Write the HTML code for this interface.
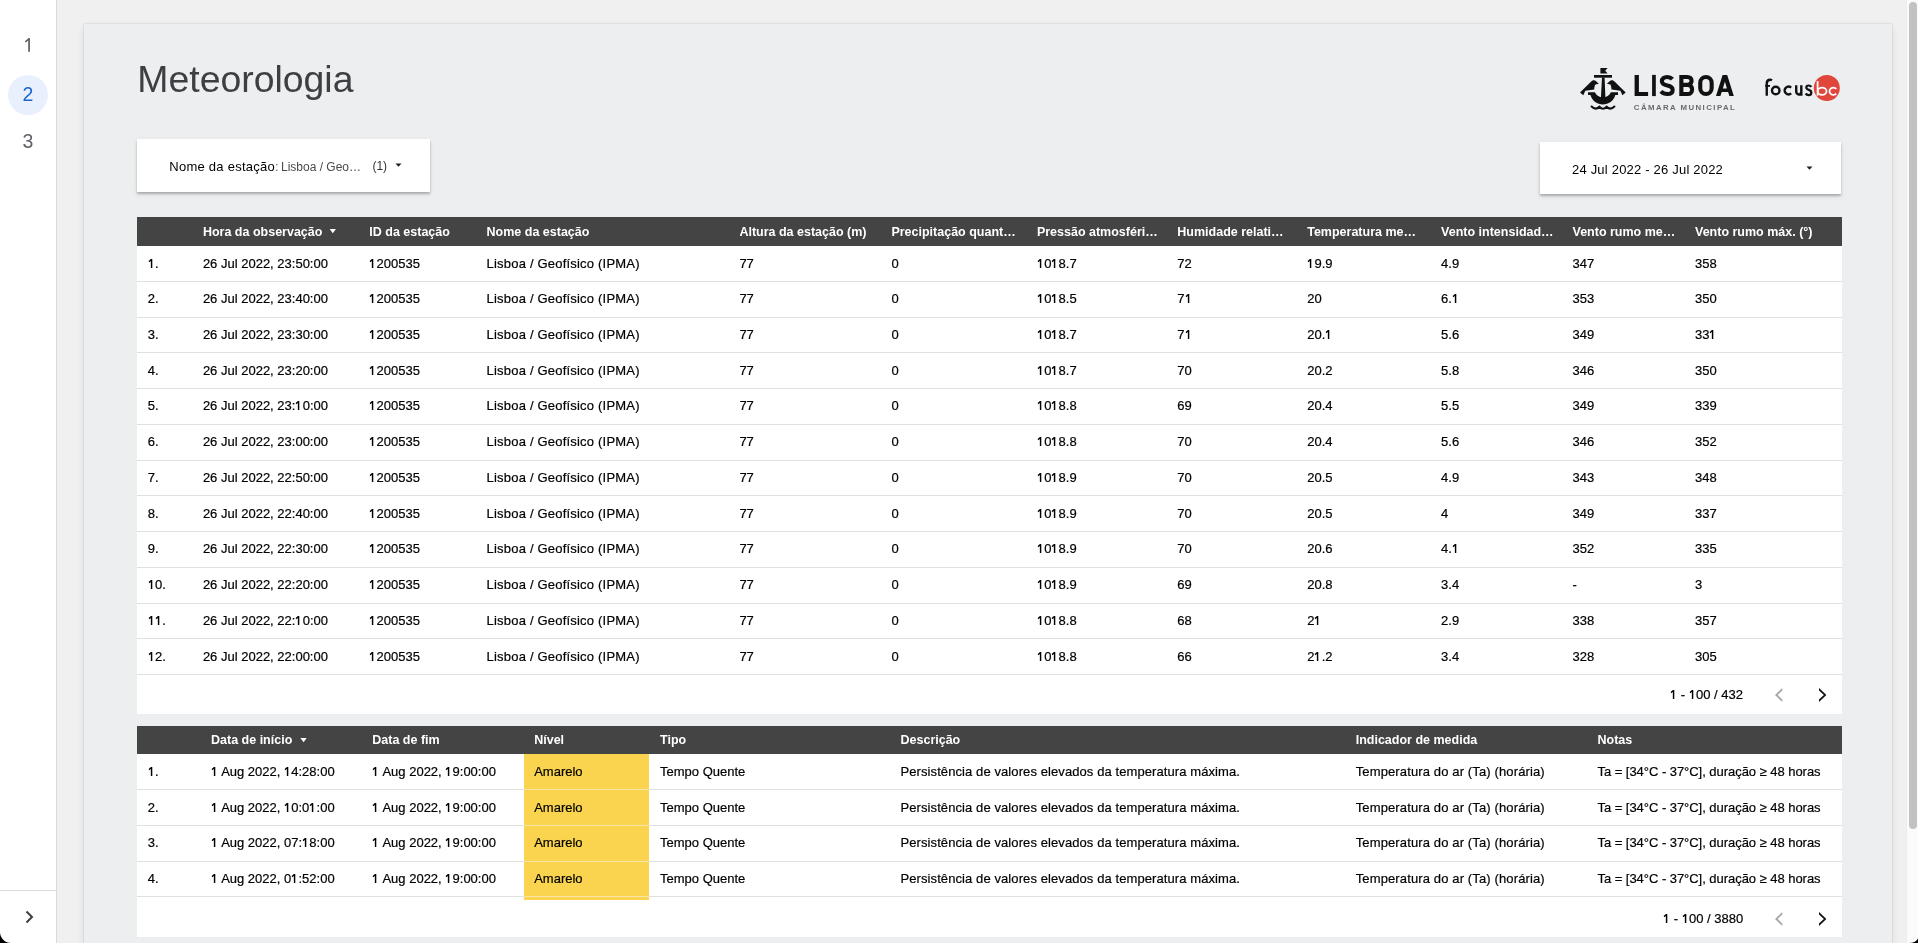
<!DOCTYPE html><html><head><meta charset="utf-8"><style>
*{box-sizing:border-box;margin:0;padding:0}
html,body{width:1918px;height:943px;overflow:hidden;background:#f0f0f0;font-family:"Liberation Sans", sans-serif;position:relative}
.abs{position:absolute}
.bt,.ht,.pt{position:absolute;white-space:nowrap;line-height:16px}
.bt{font-size:13px;color:#000;-webkit-text-stroke:0.2px #000}
.one{display:inline-block;position:relative;color:transparent;-webkit-text-stroke:0 transparent}
.one svg{position:absolute;left:0;top:0}
.ht{font-size:12.5px;color:#fff;font-weight:bold}
</style></head><body><div style="position:absolute;left:0;top:0;width:1918px;height:943px;will-change:transform">
<div class="abs" style="left:0;top:0;width:57px;height:943px;background:#fff;border-right:1px solid #dadada"></div>
<div class="abs" style="left:8px;top:74.5px;width:40px;height:40px;border-radius:50%;background:#e8f0fe"></div>
<svg class="abs" style="left:20px;top:34px" width="16" height="22" viewBox="20 34 16 22"><path d="M25.3,41.9 L29.3,38.7" stroke="#5f6368" stroke-width="1.6" fill="none"/><rect x="28.2" y="38.1" width="1.75" height="13.7" fill="#5f6368"/></svg>
<div class="abs" style="left:0;width:56px;top:81.5px;height:24px;line-height:24px;text-align:center;font-size:19.5px;color:#1967d2">2</div>
<div class="abs" style="left:0;width:56px;top:129px;height:24px;line-height:24px;text-align:center;font-size:19.5px;color:#5f6368">3</div>
<div class="abs" style="left:0;top:890px;width:56px;height:1px;background:#dadada"></div>
<svg class="abs" style="left:20px;top:906px" width="18" height="22" viewBox="0 0 18 22"><path d="M6.5 5.5 L12 11 L6.5 16.5" fill="none" stroke="#3c4043" stroke-width="2"/></svg>
<div class="abs" style="left:84px;top:24px;width:1808px;height:940px;background:#eceef0;box-shadow:0 0 1.5px rgba(0,0,0,0.22),0 3px 8px rgba(0,0,0,0.09)"></div>
<div class="abs" style="left:1906px;top:0;width:12px;height:943px;background:#fbfbfb;border-left:1px solid #ececec"></div>
<div class="abs" style="left:1909px;top:2px;width:7.5px;height:827px;border-radius:4px;background:#c2c2c2"></div>
<div class="abs" style="left:137.3px;top:57px;font-size:37.4px;line-height:44px;color:#3c4043;white-space:nowrap">Meteorologia</div>
<div class="abs" style="left:137px;top:139.2px;width:293.3px;height:52.5px;background:#fff;box-shadow:0 1.5px 2px rgba(0,0,0,0.24),0 2px 6px rgba(0,0,0,0.08)"></div>
<div class="abs" style="left:169.3px;top:158.5px;line-height:16px;white-space:nowrap;font-size:13px;letter-spacing:0.25px;color:#000">Nome da estação<span style="color:#5f6368">:</span></div>
<div class="abs" style="left:281px;top:158.5px;line-height:16px;white-space:nowrap;font-size:12px;color:#4a4a4a">Lisboa / Geo…</div>
<div class="abs" style="left:372.4px;top:158px;line-height:16px;white-space:nowrap;font-size:12px;color:#333">(1)</div>
<svg class="abs" style="left:394px;top:162px" width="10" height="6"><path d="M1.5 1.5 L7.5 1.5 L4.5 4.8 Z" fill="#202020"/></svg>
<div class="abs" style="left:1540px;top:142px;width:301px;height:52.2px;background:#fff;box-shadow:0 1.5px 2px rgba(0,0,0,0.24),0 2px 6px rgba(0,0,0,0.08)"></div>
<div class="abs" style="left:1572px;top:162px;line-height:16px;white-space:nowrap;font-size:13px;letter-spacing:0.2px;color:#000">24 Jul 2022 - 26 Jul 2022</div>
<svg class="abs" style="left:1805px;top:165px" width="10" height="6"><path d="M1.5 1.5 L7.5 1.5 L4.5 4.8 Z" fill="#202020"/></svg>
<div class="abs" style="left:137px;top:217.4px;width:1704.5px;height:496.54px;background:#fff"></div>
<div class="abs" style="left:137px;top:217.4px;width:1704.5px;height:28.3px;background:#444"></div>
<div class="ht" style="left:202.9px;top:224px;">Hora da observação</div>
<div class="ht" style="left:369.3px;top:224px;">ID da estação</div>
<div class="ht" style="left:486.6px;top:224px;">Nome da estação</div>
<div class="ht" style="left:739.4px;top:224px;">Altura da estação (m)</div>
<div class="ht" style="left:891.4px;top:224px;">Precipitação quant…</div>
<div class="ht" style="left:1036.9px;top:224px;">Pressão atmosféri…</div>
<div class="ht" style="left:1177.3px;top:224px;">Humidade relati…</div>
<div class="ht" style="left:1307.2px;top:224px;">Temperatura me…</div>
<div class="ht" style="left:1441.1px;top:224px;">Vento intensidad…</div>
<div class="ht" style="left:1572.5px;top:224px;">Vento rumo me…</div>
<div class="ht" style="left:1695.0px;top:224px;">Vento rumo máx. (°)</div>
<svg class="abs" style="left:325px;top:225px" width="15" height="12" viewBox="325 225 15 12"><polygon points="329.7,228.9 335.9,228.9 332.8,233.2" fill="#fff"/></svg>
<div class="abs" style="left:137px;top:281px;width:1704.5px;height:1px;background:#e0e0e0"></div>
<div class="bt" style="left:147.8px;top:256px;"><span class="one">1<svg width="8" height="16" viewBox="0 0 8 16"><polygon points="2.95,3.1 4.3,3.1 4.3,12 2.85,12 2.85,5.0 1.2,6.2 0.65,5.05" fill="#000"/></svg></span>.</div>
<div class="bt" style="left:202.9px;top:256px;">26 Jul 2022, 23:50:00</div>
<div class="bt" style="left:369.3px;top:256px;"><span class="one">1<svg width="8" height="16" viewBox="0 0 8 16"><polygon points="2.95,3.1 4.3,3.1 4.3,12 2.85,12 2.85,5.0 1.2,6.2 0.65,5.05" fill="#000"/></svg></span>200535</div>
<div class="bt" style="left:486.6px;top:256px;letter-spacing:0.2px">Lisboa / Geofísico (IPMA)</div>
<div class="bt" style="left:739.4px;top:256px;">77</div>
<div class="bt" style="left:891.4px;top:256px;">0</div>
<div class="bt" style="left:1036.9px;top:256px;"><span class="one">1<svg width="8" height="16" viewBox="0 0 8 16"><polygon points="2.95,3.1 4.3,3.1 4.3,12 2.85,12 2.85,5.0 1.2,6.2 0.65,5.05" fill="#000"/></svg></span>0<span class="one">1<svg width="8" height="16" viewBox="0 0 8 16"><polygon points="2.95,3.1 4.3,3.1 4.3,12 2.85,12 2.85,5.0 1.2,6.2 0.65,5.05" fill="#000"/></svg></span>8.7</div>
<div class="bt" style="left:1177.3px;top:256px;">72</div>
<div class="bt" style="left:1307.2px;top:256px;"><span class="one">1<svg width="8" height="16" viewBox="0 0 8 16"><polygon points="2.95,3.1 4.3,3.1 4.3,12 2.85,12 2.85,5.0 1.2,6.2 0.65,5.05" fill="#000"/></svg></span>9.9</div>
<div class="bt" style="left:1441.1px;top:256px;">4.9</div>
<div class="bt" style="left:1572.5px;top:256px;">347</div>
<div class="bt" style="left:1695.0px;top:256px;">358</div>
<div class="abs" style="left:137px;top:317px;width:1704.5px;height:1px;background:#e0e0e0"></div>
<div class="bt" style="left:147.8px;top:291px;">2.</div>
<div class="bt" style="left:202.9px;top:291px;">26 Jul 2022, 23:40:00</div>
<div class="bt" style="left:369.3px;top:291px;"><span class="one">1<svg width="8" height="16" viewBox="0 0 8 16"><polygon points="2.95,3.1 4.3,3.1 4.3,12 2.85,12 2.85,5.0 1.2,6.2 0.65,5.05" fill="#000"/></svg></span>200535</div>
<div class="bt" style="left:486.6px;top:291px;letter-spacing:0.2px">Lisboa / Geofísico (IPMA)</div>
<div class="bt" style="left:739.4px;top:291px;">77</div>
<div class="bt" style="left:891.4px;top:291px;">0</div>
<div class="bt" style="left:1036.9px;top:291px;"><span class="one">1<svg width="8" height="16" viewBox="0 0 8 16"><polygon points="2.95,3.1 4.3,3.1 4.3,12 2.85,12 2.85,5.0 1.2,6.2 0.65,5.05" fill="#000"/></svg></span>0<span class="one">1<svg width="8" height="16" viewBox="0 0 8 16"><polygon points="2.95,3.1 4.3,3.1 4.3,12 2.85,12 2.85,5.0 1.2,6.2 0.65,5.05" fill="#000"/></svg></span>8.5</div>
<div class="bt" style="left:1177.3px;top:291px;">7<span class="one">1<svg width="8" height="16" viewBox="0 0 8 16"><polygon points="2.95,3.1 4.3,3.1 4.3,12 2.85,12 2.85,5.0 1.2,6.2 0.65,5.05" fill="#000"/></svg></span></div>
<div class="bt" style="left:1307.2px;top:291px;">20</div>
<div class="bt" style="left:1441.1px;top:291px;">6.<span class="one">1<svg width="8" height="16" viewBox="0 0 8 16"><polygon points="2.95,3.1 4.3,3.1 4.3,12 2.85,12 2.85,5.0 1.2,6.2 0.65,5.05" fill="#000"/></svg></span></div>
<div class="bt" style="left:1572.5px;top:291px;">353</div>
<div class="bt" style="left:1695.0px;top:291px;">350</div>
<div class="abs" style="left:137px;top:352px;width:1704.5px;height:1px;background:#e0e0e0"></div>
<div class="bt" style="left:147.8px;top:327px;">3.</div>
<div class="bt" style="left:202.9px;top:327px;">26 Jul 2022, 23:30:00</div>
<div class="bt" style="left:369.3px;top:327px;"><span class="one">1<svg width="8" height="16" viewBox="0 0 8 16"><polygon points="2.95,3.1 4.3,3.1 4.3,12 2.85,12 2.85,5.0 1.2,6.2 0.65,5.05" fill="#000"/></svg></span>200535</div>
<div class="bt" style="left:486.6px;top:327px;letter-spacing:0.2px">Lisboa / Geofísico (IPMA)</div>
<div class="bt" style="left:739.4px;top:327px;">77</div>
<div class="bt" style="left:891.4px;top:327px;">0</div>
<div class="bt" style="left:1036.9px;top:327px;"><span class="one">1<svg width="8" height="16" viewBox="0 0 8 16"><polygon points="2.95,3.1 4.3,3.1 4.3,12 2.85,12 2.85,5.0 1.2,6.2 0.65,5.05" fill="#000"/></svg></span>0<span class="one">1<svg width="8" height="16" viewBox="0 0 8 16"><polygon points="2.95,3.1 4.3,3.1 4.3,12 2.85,12 2.85,5.0 1.2,6.2 0.65,5.05" fill="#000"/></svg></span>8.7</div>
<div class="bt" style="left:1177.3px;top:327px;">7<span class="one">1<svg width="8" height="16" viewBox="0 0 8 16"><polygon points="2.95,3.1 4.3,3.1 4.3,12 2.85,12 2.85,5.0 1.2,6.2 0.65,5.05" fill="#000"/></svg></span></div>
<div class="bt" style="left:1307.2px;top:327px;">20.<span class="one">1<svg width="8" height="16" viewBox="0 0 8 16"><polygon points="2.95,3.1 4.3,3.1 4.3,12 2.85,12 2.85,5.0 1.2,6.2 0.65,5.05" fill="#000"/></svg></span></div>
<div class="bt" style="left:1441.1px;top:327px;">5.6</div>
<div class="bt" style="left:1572.5px;top:327px;">349</div>
<div class="bt" style="left:1695.0px;top:327px;">33<span class="one">1<svg width="8" height="16" viewBox="0 0 8 16"><polygon points="2.95,3.1 4.3,3.1 4.3,12 2.85,12 2.85,5.0 1.2,6.2 0.65,5.05" fill="#000"/></svg></span></div>
<div class="abs" style="left:137px;top:388px;width:1704.5px;height:1px;background:#e0e0e0"></div>
<div class="bt" style="left:147.8px;top:363px;">4.</div>
<div class="bt" style="left:202.9px;top:363px;">26 Jul 2022, 23:20:00</div>
<div class="bt" style="left:369.3px;top:363px;"><span class="one">1<svg width="8" height="16" viewBox="0 0 8 16"><polygon points="2.95,3.1 4.3,3.1 4.3,12 2.85,12 2.85,5.0 1.2,6.2 0.65,5.05" fill="#000"/></svg></span>200535</div>
<div class="bt" style="left:486.6px;top:363px;letter-spacing:0.2px">Lisboa / Geofísico (IPMA)</div>
<div class="bt" style="left:739.4px;top:363px;">77</div>
<div class="bt" style="left:891.4px;top:363px;">0</div>
<div class="bt" style="left:1036.9px;top:363px;"><span class="one">1<svg width="8" height="16" viewBox="0 0 8 16"><polygon points="2.95,3.1 4.3,3.1 4.3,12 2.85,12 2.85,5.0 1.2,6.2 0.65,5.05" fill="#000"/></svg></span>0<span class="one">1<svg width="8" height="16" viewBox="0 0 8 16"><polygon points="2.95,3.1 4.3,3.1 4.3,12 2.85,12 2.85,5.0 1.2,6.2 0.65,5.05" fill="#000"/></svg></span>8.7</div>
<div class="bt" style="left:1177.3px;top:363px;">70</div>
<div class="bt" style="left:1307.2px;top:363px;">20.2</div>
<div class="bt" style="left:1441.1px;top:363px;">5.8</div>
<div class="bt" style="left:1572.5px;top:363px;">346</div>
<div class="bt" style="left:1695.0px;top:363px;">350</div>
<div class="abs" style="left:137px;top:424px;width:1704.5px;height:1px;background:#e0e0e0"></div>
<div class="bt" style="left:147.8px;top:398px;">5.</div>
<div class="bt" style="left:202.9px;top:398px;">26 Jul 2022, 23:<span class="one">1<svg width="8" height="16" viewBox="0 0 8 16"><polygon points="2.95,3.1 4.3,3.1 4.3,12 2.85,12 2.85,5.0 1.2,6.2 0.65,5.05" fill="#000"/></svg></span>0:00</div>
<div class="bt" style="left:369.3px;top:398px;"><span class="one">1<svg width="8" height="16" viewBox="0 0 8 16"><polygon points="2.95,3.1 4.3,3.1 4.3,12 2.85,12 2.85,5.0 1.2,6.2 0.65,5.05" fill="#000"/></svg></span>200535</div>
<div class="bt" style="left:486.6px;top:398px;letter-spacing:0.2px">Lisboa / Geofísico (IPMA)</div>
<div class="bt" style="left:739.4px;top:398px;">77</div>
<div class="bt" style="left:891.4px;top:398px;">0</div>
<div class="bt" style="left:1036.9px;top:398px;"><span class="one">1<svg width="8" height="16" viewBox="0 0 8 16"><polygon points="2.95,3.1 4.3,3.1 4.3,12 2.85,12 2.85,5.0 1.2,6.2 0.65,5.05" fill="#000"/></svg></span>0<span class="one">1<svg width="8" height="16" viewBox="0 0 8 16"><polygon points="2.95,3.1 4.3,3.1 4.3,12 2.85,12 2.85,5.0 1.2,6.2 0.65,5.05" fill="#000"/></svg></span>8.8</div>
<div class="bt" style="left:1177.3px;top:398px;">69</div>
<div class="bt" style="left:1307.2px;top:398px;">20.4</div>
<div class="bt" style="left:1441.1px;top:398px;">5.5</div>
<div class="bt" style="left:1572.5px;top:398px;">349</div>
<div class="bt" style="left:1695.0px;top:398px;">339</div>
<div class="abs" style="left:137px;top:460px;width:1704.5px;height:1px;background:#e0e0e0"></div>
<div class="bt" style="left:147.8px;top:434px;">6.</div>
<div class="bt" style="left:202.9px;top:434px;">26 Jul 2022, 23:00:00</div>
<div class="bt" style="left:369.3px;top:434px;"><span class="one">1<svg width="8" height="16" viewBox="0 0 8 16"><polygon points="2.95,3.1 4.3,3.1 4.3,12 2.85,12 2.85,5.0 1.2,6.2 0.65,5.05" fill="#000"/></svg></span>200535</div>
<div class="bt" style="left:486.6px;top:434px;letter-spacing:0.2px">Lisboa / Geofísico (IPMA)</div>
<div class="bt" style="left:739.4px;top:434px;">77</div>
<div class="bt" style="left:891.4px;top:434px;">0</div>
<div class="bt" style="left:1036.9px;top:434px;"><span class="one">1<svg width="8" height="16" viewBox="0 0 8 16"><polygon points="2.95,3.1 4.3,3.1 4.3,12 2.85,12 2.85,5.0 1.2,6.2 0.65,5.05" fill="#000"/></svg></span>0<span class="one">1<svg width="8" height="16" viewBox="0 0 8 16"><polygon points="2.95,3.1 4.3,3.1 4.3,12 2.85,12 2.85,5.0 1.2,6.2 0.65,5.05" fill="#000"/></svg></span>8.8</div>
<div class="bt" style="left:1177.3px;top:434px;">70</div>
<div class="bt" style="left:1307.2px;top:434px;">20.4</div>
<div class="bt" style="left:1441.1px;top:434px;">5.6</div>
<div class="bt" style="left:1572.5px;top:434px;">346</div>
<div class="bt" style="left:1695.0px;top:434px;">352</div>
<div class="abs" style="left:137px;top:495px;width:1704.5px;height:1px;background:#e0e0e0"></div>
<div class="bt" style="left:147.8px;top:470px;">7.</div>
<div class="bt" style="left:202.9px;top:470px;">26 Jul 2022, 22:50:00</div>
<div class="bt" style="left:369.3px;top:470px;"><span class="one">1<svg width="8" height="16" viewBox="0 0 8 16"><polygon points="2.95,3.1 4.3,3.1 4.3,12 2.85,12 2.85,5.0 1.2,6.2 0.65,5.05" fill="#000"/></svg></span>200535</div>
<div class="bt" style="left:486.6px;top:470px;letter-spacing:0.2px">Lisboa / Geofísico (IPMA)</div>
<div class="bt" style="left:739.4px;top:470px;">77</div>
<div class="bt" style="left:891.4px;top:470px;">0</div>
<div class="bt" style="left:1036.9px;top:470px;"><span class="one">1<svg width="8" height="16" viewBox="0 0 8 16"><polygon points="2.95,3.1 4.3,3.1 4.3,12 2.85,12 2.85,5.0 1.2,6.2 0.65,5.05" fill="#000"/></svg></span>0<span class="one">1<svg width="8" height="16" viewBox="0 0 8 16"><polygon points="2.95,3.1 4.3,3.1 4.3,12 2.85,12 2.85,5.0 1.2,6.2 0.65,5.05" fill="#000"/></svg></span>8.9</div>
<div class="bt" style="left:1177.3px;top:470px;">70</div>
<div class="bt" style="left:1307.2px;top:470px;">20.5</div>
<div class="bt" style="left:1441.1px;top:470px;">4.9</div>
<div class="bt" style="left:1572.5px;top:470px;">343</div>
<div class="bt" style="left:1695.0px;top:470px;">348</div>
<div class="abs" style="left:137px;top:531px;width:1704.5px;height:1px;background:#e0e0e0"></div>
<div class="bt" style="left:147.8px;top:506px;">8.</div>
<div class="bt" style="left:202.9px;top:506px;">26 Jul 2022, 22:40:00</div>
<div class="bt" style="left:369.3px;top:506px;"><span class="one">1<svg width="8" height="16" viewBox="0 0 8 16"><polygon points="2.95,3.1 4.3,3.1 4.3,12 2.85,12 2.85,5.0 1.2,6.2 0.65,5.05" fill="#000"/></svg></span>200535</div>
<div class="bt" style="left:486.6px;top:506px;letter-spacing:0.2px">Lisboa / Geofísico (IPMA)</div>
<div class="bt" style="left:739.4px;top:506px;">77</div>
<div class="bt" style="left:891.4px;top:506px;">0</div>
<div class="bt" style="left:1036.9px;top:506px;"><span class="one">1<svg width="8" height="16" viewBox="0 0 8 16"><polygon points="2.95,3.1 4.3,3.1 4.3,12 2.85,12 2.85,5.0 1.2,6.2 0.65,5.05" fill="#000"/></svg></span>0<span class="one">1<svg width="8" height="16" viewBox="0 0 8 16"><polygon points="2.95,3.1 4.3,3.1 4.3,12 2.85,12 2.85,5.0 1.2,6.2 0.65,5.05" fill="#000"/></svg></span>8.9</div>
<div class="bt" style="left:1177.3px;top:506px;">70</div>
<div class="bt" style="left:1307.2px;top:506px;">20.5</div>
<div class="bt" style="left:1441.1px;top:506px;">4</div>
<div class="bt" style="left:1572.5px;top:506px;">349</div>
<div class="bt" style="left:1695.0px;top:506px;">337</div>
<div class="abs" style="left:137px;top:567px;width:1704.5px;height:1px;background:#e0e0e0"></div>
<div class="bt" style="left:147.8px;top:541px;">9.</div>
<div class="bt" style="left:202.9px;top:541px;">26 Jul 2022, 22:30:00</div>
<div class="bt" style="left:369.3px;top:541px;"><span class="one">1<svg width="8" height="16" viewBox="0 0 8 16"><polygon points="2.95,3.1 4.3,3.1 4.3,12 2.85,12 2.85,5.0 1.2,6.2 0.65,5.05" fill="#000"/></svg></span>200535</div>
<div class="bt" style="left:486.6px;top:541px;letter-spacing:0.2px">Lisboa / Geofísico (IPMA)</div>
<div class="bt" style="left:739.4px;top:541px;">77</div>
<div class="bt" style="left:891.4px;top:541px;">0</div>
<div class="bt" style="left:1036.9px;top:541px;"><span class="one">1<svg width="8" height="16" viewBox="0 0 8 16"><polygon points="2.95,3.1 4.3,3.1 4.3,12 2.85,12 2.85,5.0 1.2,6.2 0.65,5.05" fill="#000"/></svg></span>0<span class="one">1<svg width="8" height="16" viewBox="0 0 8 16"><polygon points="2.95,3.1 4.3,3.1 4.3,12 2.85,12 2.85,5.0 1.2,6.2 0.65,5.05" fill="#000"/></svg></span>8.9</div>
<div class="bt" style="left:1177.3px;top:541px;">70</div>
<div class="bt" style="left:1307.2px;top:541px;">20.6</div>
<div class="bt" style="left:1441.1px;top:541px;">4.<span class="one">1<svg width="8" height="16" viewBox="0 0 8 16"><polygon points="2.95,3.1 4.3,3.1 4.3,12 2.85,12 2.85,5.0 1.2,6.2 0.65,5.05" fill="#000"/></svg></span></div>
<div class="bt" style="left:1572.5px;top:541px;">352</div>
<div class="bt" style="left:1695.0px;top:541px;">335</div>
<div class="abs" style="left:137px;top:603px;width:1704.5px;height:1px;background:#e0e0e0"></div>
<div class="bt" style="left:147.8px;top:577px;"><span class="one">1<svg width="8" height="16" viewBox="0 0 8 16"><polygon points="2.95,3.1 4.3,3.1 4.3,12 2.85,12 2.85,5.0 1.2,6.2 0.65,5.05" fill="#000"/></svg></span>0.</div>
<div class="bt" style="left:202.9px;top:577px;">26 Jul 2022, 22:20:00</div>
<div class="bt" style="left:369.3px;top:577px;"><span class="one">1<svg width="8" height="16" viewBox="0 0 8 16"><polygon points="2.95,3.1 4.3,3.1 4.3,12 2.85,12 2.85,5.0 1.2,6.2 0.65,5.05" fill="#000"/></svg></span>200535</div>
<div class="bt" style="left:486.6px;top:577px;letter-spacing:0.2px">Lisboa / Geofísico (IPMA)</div>
<div class="bt" style="left:739.4px;top:577px;">77</div>
<div class="bt" style="left:891.4px;top:577px;">0</div>
<div class="bt" style="left:1036.9px;top:577px;"><span class="one">1<svg width="8" height="16" viewBox="0 0 8 16"><polygon points="2.95,3.1 4.3,3.1 4.3,12 2.85,12 2.85,5.0 1.2,6.2 0.65,5.05" fill="#000"/></svg></span>0<span class="one">1<svg width="8" height="16" viewBox="0 0 8 16"><polygon points="2.95,3.1 4.3,3.1 4.3,12 2.85,12 2.85,5.0 1.2,6.2 0.65,5.05" fill="#000"/></svg></span>8.9</div>
<div class="bt" style="left:1177.3px;top:577px;">69</div>
<div class="bt" style="left:1307.2px;top:577px;">20.8</div>
<div class="bt" style="left:1441.1px;top:577px;">3.4</div>
<div class="bt" style="left:1572.5px;top:577px;">-</div>
<div class="bt" style="left:1695.0px;top:577px;">3</div>
<div class="abs" style="left:137px;top:638px;width:1704.5px;height:1px;background:#e0e0e0"></div>
<div class="bt" style="left:147.8px;top:613px;"><span class="one">1<svg width="8" height="16" viewBox="0 0 8 16"><polygon points="2.95,3.1 4.3,3.1 4.3,12 2.85,12 2.85,5.0 1.2,6.2 0.65,5.05" fill="#000"/></svg></span><span class="one">1<svg width="8" height="16" viewBox="0 0 8 16"><polygon points="2.95,3.1 4.3,3.1 4.3,12 2.85,12 2.85,5.0 1.2,6.2 0.65,5.05" fill="#000"/></svg></span>.</div>
<div class="bt" style="left:202.9px;top:613px;">26 Jul 2022, 22:<span class="one">1<svg width="8" height="16" viewBox="0 0 8 16"><polygon points="2.95,3.1 4.3,3.1 4.3,12 2.85,12 2.85,5.0 1.2,6.2 0.65,5.05" fill="#000"/></svg></span>0:00</div>
<div class="bt" style="left:369.3px;top:613px;"><span class="one">1<svg width="8" height="16" viewBox="0 0 8 16"><polygon points="2.95,3.1 4.3,3.1 4.3,12 2.85,12 2.85,5.0 1.2,6.2 0.65,5.05" fill="#000"/></svg></span>200535</div>
<div class="bt" style="left:486.6px;top:613px;letter-spacing:0.2px">Lisboa / Geofísico (IPMA)</div>
<div class="bt" style="left:739.4px;top:613px;">77</div>
<div class="bt" style="left:891.4px;top:613px;">0</div>
<div class="bt" style="left:1036.9px;top:613px;"><span class="one">1<svg width="8" height="16" viewBox="0 0 8 16"><polygon points="2.95,3.1 4.3,3.1 4.3,12 2.85,12 2.85,5.0 1.2,6.2 0.65,5.05" fill="#000"/></svg></span>0<span class="one">1<svg width="8" height="16" viewBox="0 0 8 16"><polygon points="2.95,3.1 4.3,3.1 4.3,12 2.85,12 2.85,5.0 1.2,6.2 0.65,5.05" fill="#000"/></svg></span>8.8</div>
<div class="bt" style="left:1177.3px;top:613px;">68</div>
<div class="bt" style="left:1307.2px;top:613px;">2<span class="one">1<svg width="8" height="16" viewBox="0 0 8 16"><polygon points="2.95,3.1 4.3,3.1 4.3,12 2.85,12 2.85,5.0 1.2,6.2 0.65,5.05" fill="#000"/></svg></span></div>
<div class="bt" style="left:1441.1px;top:613px;">2.9</div>
<div class="bt" style="left:1572.5px;top:613px;">338</div>
<div class="bt" style="left:1695.0px;top:613px;">357</div>
<div class="abs" style="left:137px;top:674px;width:1704.5px;height:1px;background:#e0e0e0"></div>
<div class="bt" style="left:147.8px;top:649px;"><span class="one">1<svg width="8" height="16" viewBox="0 0 8 16"><polygon points="2.95,3.1 4.3,3.1 4.3,12 2.85,12 2.85,5.0 1.2,6.2 0.65,5.05" fill="#000"/></svg></span>2.</div>
<div class="bt" style="left:202.9px;top:649px;">26 Jul 2022, 22:00:00</div>
<div class="bt" style="left:369.3px;top:649px;"><span class="one">1<svg width="8" height="16" viewBox="0 0 8 16"><polygon points="2.95,3.1 4.3,3.1 4.3,12 2.85,12 2.85,5.0 1.2,6.2 0.65,5.05" fill="#000"/></svg></span>200535</div>
<div class="bt" style="left:486.6px;top:649px;letter-spacing:0.2px">Lisboa / Geofísico (IPMA)</div>
<div class="bt" style="left:739.4px;top:649px;">77</div>
<div class="bt" style="left:891.4px;top:649px;">0</div>
<div class="bt" style="left:1036.9px;top:649px;"><span class="one">1<svg width="8" height="16" viewBox="0 0 8 16"><polygon points="2.95,3.1 4.3,3.1 4.3,12 2.85,12 2.85,5.0 1.2,6.2 0.65,5.05" fill="#000"/></svg></span>0<span class="one">1<svg width="8" height="16" viewBox="0 0 8 16"><polygon points="2.95,3.1 4.3,3.1 4.3,12 2.85,12 2.85,5.0 1.2,6.2 0.65,5.05" fill="#000"/></svg></span>8.8</div>
<div class="bt" style="left:1177.3px;top:649px;">66</div>
<div class="bt" style="left:1307.2px;top:649px;">2<span class="one">1<svg width="8" height="16" viewBox="0 0 8 16"><polygon points="2.95,3.1 4.3,3.1 4.3,12 2.85,12 2.85,5.0 1.2,6.2 0.65,5.05" fill="#000"/></svg></span>.2</div>
<div class="bt" style="left:1441.1px;top:649px;">3.4</div>
<div class="bt" style="left:1572.5px;top:649px;">328</div>
<div class="bt" style="left:1695.0px;top:649px;">305</div>
<div class="bt" style="left:1670.0px;top:687px;"><span class="one">1<svg width="8" height="16" viewBox="0 0 8 16"><polygon points="2.95,3.1 4.3,3.1 4.3,12 2.85,12 2.85,5.0 1.2,6.2 0.65,5.05" fill="#000"/></svg></span> - <span class="one">1<svg width="8" height="16" viewBox="0 0 8 16"><polygon points="2.95,3.1 4.3,3.1 4.3,12 2.85,12 2.85,5.0 1.2,6.2 0.65,5.05" fill="#000"/></svg></span>00 / 432</div>
<svg class="abs" style="left:1770px;top:685.4px" width="20" height="20" viewBox="1770 685.4 20 20"><polygon points="1782.3,688.30 1775.0,695.40 1782.3,702.50 1782.3,699.80 1777.7,695.40 1782.3,691.00" fill="#a6a6a6"/></svg>
<svg class="abs" style="left:1813px;top:685.4px" width="20" height="20" viewBox="1813 685.4 20 20"><polygon points="1819.0,688.30 1826.4,695.40 1819.0,702.50 1819.0,699.90 1823.9,695.40 1819.0,690.90" fill="#111"/></svg>
<div class="abs" style="left:137px;top:725.9px;width:1704.5px;height:210.78px;background:#fff"></div>
<div class="abs" style="left:137px;top:725.9px;width:1704.5px;height:28.3px;background:#444"></div>
<div class="ht" style="left:211.0px;top:732px;">Data de início</div>
<div class="ht" style="left:372.3px;top:732px;">Data de fim</div>
<div class="ht" style="left:534.2px;top:732px;">Nível</div>
<div class="ht" style="left:660.0px;top:732px;">Tipo</div>
<div class="ht" style="left:900.5px;top:732px;">Descrição</div>
<div class="ht" style="left:1355.7px;top:732px;">Indicador de medida</div>
<div class="ht" style="left:1597.5px;top:732px;">Notas</div>
<svg class="abs" style="left:296px;top:734px" width="15" height="12" viewBox="296 734 15 12"><polygon points="300.4,737.9 306.7,737.9 303.55,742.2" fill="#fff"/></svg>
<div class="abs" style="left:523.8px;top:754.20px;width:125.1px;height:145.68px;background:#fad44e"></div>
<div class="abs" style="left:137px;top:789px;width:1704.5px;height:1px;background:#e0e0e0"></div>
<div class="abs" style="left:523.8px;top:789px;width:125.1px;height:1px;background:#f8e6a8"></div>
<div class="bt" style="left:147.8px;top:764px;"><span class="one">1<svg width="8" height="16" viewBox="0 0 8 16"><polygon points="2.95,3.1 4.3,3.1 4.3,12 2.85,12 2.85,5.0 1.2,6.2 0.65,5.05" fill="#000"/></svg></span>.</div>
<div class="bt" style="left:211.0px;top:764px;"><span class="one">1<svg width="8" height="16" viewBox="0 0 8 16"><polygon points="2.95,3.1 4.3,3.1 4.3,12 2.85,12 2.85,5.0 1.2,6.2 0.65,5.05" fill="#000"/></svg></span> Aug 2022, <span class="one">1<svg width="8" height="16" viewBox="0 0 8 16"><polygon points="2.95,3.1 4.3,3.1 4.3,12 2.85,12 2.85,5.0 1.2,6.2 0.65,5.05" fill="#000"/></svg></span>4:28:00</div>
<div class="bt" style="left:372.3px;top:764px;"><span class="one">1<svg width="8" height="16" viewBox="0 0 8 16"><polygon points="2.95,3.1 4.3,3.1 4.3,12 2.85,12 2.85,5.0 1.2,6.2 0.65,5.05" fill="#000"/></svg></span> Aug 2022, <span class="one">1<svg width="8" height="16" viewBox="0 0 8 16"><polygon points="2.95,3.1 4.3,3.1 4.3,12 2.85,12 2.85,5.0 1.2,6.2 0.65,5.05" fill="#000"/></svg></span>9:00:00</div>
<div class="bt" style="left:534.2px;top:764px;">Amarelo</div>
<div class="bt" style="left:660.0px;top:764px;">Tempo Quente</div>
<div class="bt" style="left:900.5px;top:764px;letter-spacing:0.09px">Persistência de valores elevados da temperatura máxima.</div>
<div class="bt" style="left:1355.7px;top:764px;letter-spacing:0.13px">Temperatura do ar (Ta) (horária)</div>
<div class="bt" style="left:1597.5px;top:764px;letter-spacing:-0.04px">Ta = [34°C - 37°C], duração ≥ 48 horas</div>
<div class="abs" style="left:137px;top:825px;width:1704.5px;height:1px;background:#e0e0e0"></div>
<div class="abs" style="left:523.8px;top:825px;width:125.1px;height:1px;background:#f8e6a8"></div>
<div class="bt" style="left:147.8px;top:800px;">2.</div>
<div class="bt" style="left:211.0px;top:800px;"><span class="one">1<svg width="8" height="16" viewBox="0 0 8 16"><polygon points="2.95,3.1 4.3,3.1 4.3,12 2.85,12 2.85,5.0 1.2,6.2 0.65,5.05" fill="#000"/></svg></span> Aug 2022, <span class="one">1<svg width="8" height="16" viewBox="0 0 8 16"><polygon points="2.95,3.1 4.3,3.1 4.3,12 2.85,12 2.85,5.0 1.2,6.2 0.65,5.05" fill="#000"/></svg></span>0:0<span class="one">1<svg width="8" height="16" viewBox="0 0 8 16"><polygon points="2.95,3.1 4.3,3.1 4.3,12 2.85,12 2.85,5.0 1.2,6.2 0.65,5.05" fill="#000"/></svg></span>:00</div>
<div class="bt" style="left:372.3px;top:800px;"><span class="one">1<svg width="8" height="16" viewBox="0 0 8 16"><polygon points="2.95,3.1 4.3,3.1 4.3,12 2.85,12 2.85,5.0 1.2,6.2 0.65,5.05" fill="#000"/></svg></span> Aug 2022, <span class="one">1<svg width="8" height="16" viewBox="0 0 8 16"><polygon points="2.95,3.1 4.3,3.1 4.3,12 2.85,12 2.85,5.0 1.2,6.2 0.65,5.05" fill="#000"/></svg></span>9:00:00</div>
<div class="bt" style="left:534.2px;top:800px;">Amarelo</div>
<div class="bt" style="left:660.0px;top:800px;">Tempo Quente</div>
<div class="bt" style="left:900.5px;top:800px;letter-spacing:0.09px">Persistência de valores elevados da temperatura máxima.</div>
<div class="bt" style="left:1355.7px;top:800px;letter-spacing:0.13px">Temperatura do ar (Ta) (horária)</div>
<div class="bt" style="left:1597.5px;top:800px;letter-spacing:-0.04px">Ta = [34°C - 37°C], duração ≥ 48 horas</div>
<div class="abs" style="left:137px;top:861px;width:1704.5px;height:1px;background:#e0e0e0"></div>
<div class="abs" style="left:523.8px;top:861px;width:125.1px;height:1px;background:#f8e6a8"></div>
<div class="bt" style="left:147.8px;top:835px;">3.</div>
<div class="bt" style="left:211.0px;top:835px;"><span class="one">1<svg width="8" height="16" viewBox="0 0 8 16"><polygon points="2.95,3.1 4.3,3.1 4.3,12 2.85,12 2.85,5.0 1.2,6.2 0.65,5.05" fill="#000"/></svg></span> Aug 2022, 07:<span class="one">1<svg width="8" height="16" viewBox="0 0 8 16"><polygon points="2.95,3.1 4.3,3.1 4.3,12 2.85,12 2.85,5.0 1.2,6.2 0.65,5.05" fill="#000"/></svg></span>8:00</div>
<div class="bt" style="left:372.3px;top:835px;"><span class="one">1<svg width="8" height="16" viewBox="0 0 8 16"><polygon points="2.95,3.1 4.3,3.1 4.3,12 2.85,12 2.85,5.0 1.2,6.2 0.65,5.05" fill="#000"/></svg></span> Aug 2022, <span class="one">1<svg width="8" height="16" viewBox="0 0 8 16"><polygon points="2.95,3.1 4.3,3.1 4.3,12 2.85,12 2.85,5.0 1.2,6.2 0.65,5.05" fill="#000"/></svg></span>9:00:00</div>
<div class="bt" style="left:534.2px;top:835px;">Amarelo</div>
<div class="bt" style="left:660.0px;top:835px;">Tempo Quente</div>
<div class="bt" style="left:900.5px;top:835px;letter-spacing:0.09px">Persistência de valores elevados da temperatura máxima.</div>
<div class="bt" style="left:1355.7px;top:835px;letter-spacing:0.13px">Temperatura do ar (Ta) (horária)</div>
<div class="bt" style="left:1597.5px;top:835px;letter-spacing:-0.04px">Ta = [34°C - 37°C], duração ≥ 48 horas</div>
<div class="abs" style="left:137px;top:896px;width:1704.5px;height:1px;background:#e0e0e0"></div>
<div class="abs" style="left:523.8px;top:896px;width:125.1px;height:1px;background:#f8e6a8"></div>
<div class="bt" style="left:147.8px;top:871px;">4.</div>
<div class="bt" style="left:211.0px;top:871px;"><span class="one">1<svg width="8" height="16" viewBox="0 0 8 16"><polygon points="2.95,3.1 4.3,3.1 4.3,12 2.85,12 2.85,5.0 1.2,6.2 0.65,5.05" fill="#000"/></svg></span> Aug 2022, 0<span class="one">1<svg width="8" height="16" viewBox="0 0 8 16"><polygon points="2.95,3.1 4.3,3.1 4.3,12 2.85,12 2.85,5.0 1.2,6.2 0.65,5.05" fill="#000"/></svg></span>:52:00</div>
<div class="bt" style="left:372.3px;top:871px;"><span class="one">1<svg width="8" height="16" viewBox="0 0 8 16"><polygon points="2.95,3.1 4.3,3.1 4.3,12 2.85,12 2.85,5.0 1.2,6.2 0.65,5.05" fill="#000"/></svg></span> Aug 2022, <span class="one">1<svg width="8" height="16" viewBox="0 0 8 16"><polygon points="2.95,3.1 4.3,3.1 4.3,12 2.85,12 2.85,5.0 1.2,6.2 0.65,5.05" fill="#000"/></svg></span>9:00:00</div>
<div class="bt" style="left:534.2px;top:871px;">Amarelo</div>
<div class="bt" style="left:660.0px;top:871px;">Tempo Quente</div>
<div class="bt" style="left:900.5px;top:871px;letter-spacing:0.09px">Persistência de valores elevados da temperatura máxima.</div>
<div class="bt" style="left:1355.7px;top:871px;letter-spacing:0.13px">Temperatura do ar (Ta) (horária)</div>
<div class="bt" style="left:1597.5px;top:871px;letter-spacing:-0.04px">Ta = [34°C - 37°C], duração ≥ 48 horas</div>
<div class="bt" style="left:1663.0px;top:911px;"><span class="one">1<svg width="8" height="16" viewBox="0 0 8 16"><polygon points="2.95,3.1 4.3,3.1 4.3,12 2.85,12 2.85,5.0 1.2,6.2 0.65,5.05" fill="#000"/></svg></span> - <span class="one">1<svg width="8" height="16" viewBox="0 0 8 16"><polygon points="2.95,3.1 4.3,3.1 4.3,12 2.85,12 2.85,5.0 1.2,6.2 0.65,5.05" fill="#000"/></svg></span>00 / 3880</div>
<svg class="abs" style="left:1770px;top:908.6px" width="20" height="20" viewBox="1770 908.6 20 20"><polygon points="1782.3,911.50 1775.0,918.60 1782.3,925.70 1782.3,923.00 1777.7,918.60 1782.3,914.20" fill="#a6a6a6"/></svg>
<svg class="abs" style="left:1813px;top:908.6px" width="20" height="20" viewBox="1813 908.6 20 20"><polygon points="1819.0,911.50 1826.4,918.60 1819.0,925.70 1819.0,923.10 1823.9,918.60 1819.0,914.10" fill="#111"/></svg>
<svg class="abs" style="left:1575px;top:62px" width="60" height="52" viewBox="0 0 60 52">
<g fill="#111">
<polygon points="25.4,6.1 32.6,6.1 30.2,8.85 32.6,11.6 25.4,11.6"/>
<rect x="19" y="13" width="18" height="2.7"/>
<polygon points="27,15.5 29.6,15.5 30.4,36 25.9,36"/>
<path d="M13,30.3 L19.9,30.3 C21.5,33.6 24.2,35.4 27.9,35.5 C31.6,35.4 34.3,33.6 35.9,30.3 L43,30.3 L43,33.1 L40.3,33.1 C38.6,39.2 33.6,42.6 27.9,42.6 C22.2,42.6 17.2,39.2 15.5,33.1 L13,33.1 Z"/>
<path d="M5,30.6 L16.2,19.6 C17.4,18.4 19.4,17.8 20.8,18.9 L23.8,21.8 L20.4,22.5 C19.7,23.4 19.4,25 19.2,27.4 L10.3,28.7 L8.3,33.2 Z"/>
<path d="M50.7,30.6 L39.5,19.6 C38.3,18.4 36.3,17.8 34.9,18.9 L31.9,21.8 L35.3,22.5 C36,23.4 36.3,25 36.5,27.4 L45.4,28.7 L47.4,33.2 Z"/>
</g>
<path d="M16.6,44.6 Q20.5,48.6 24.4,44.8 Q28,48.6 31.6,44.8 Q35.5,48.6 39.4,44.6" fill="none" stroke="#111" stroke-width="2.1" stroke-linecap="round"/>
</svg>
<svg class="abs" style="left:1630px;top:68px" width="110" height="46" viewBox="0 0 110 46">
<g fill="#111">
<polygon points="4.6,6.9 8.9,6.9 8.9,24 18.1,24 18.1,28.1 4.6,28.1"/>
<rect x="22.1" y="6.9" width="3.7" height="21.2"/>
<polygon fill-rule="evenodd" points="86,28.1 92.6,6.9 97.2,6.9 103.8,28.1 99.4,28.1 98.1,24 91.7,24 90.4,28.1 Z"/>
</g>
<polygon fill="#eceef0" points="92.9,20.4 96.9,20.4 94.9,13.6"/>
<g fill="none" stroke="#111" stroke-width="4.1">
<path d="M42.4,11.2 C41,9.6 39.2,8.95 37.2,8.95 C34,8.95 31.9,10.8 31.9,13.3 C31.9,16 34,16.9 37.3,17.5 C40.8,18.1 42.65,19.4 42.65,22 C42.65,24.7 40.5,26.05 37.3,26.05 C34.8,26.05 32.6,25.2 30.9,23.4"/>
<path d="M51.35,6.9 V28.1 M49.3,8.95 H57.4 C60.1,8.95 61.6,10.6 61.6,12.8 C61.6,15.1 60.1,16.9 57.4,16.9 H51.35 M51.35,16.9 H57.6 C60.5,16.9 62.1,18.8 62.1,21.4 C62.1,24.2 60.4,26.05 57.6,26.05 H49.3"/>
<rect x="70.25" y="8.95" width="11.4" height="17.1" rx="5.7" ry="5.7"/>
</g>
</svg>
<div class="abs" style="left:1633.8px;top:101.8px;font-size:7.8px;line-height:12px;letter-spacing:1.45px;font-weight:bold;color:#6a6a6a;white-space:nowrap">CÂMARA MUNICIPAL</div>
<svg class="abs" style="left:1760px;top:70px" width="85" height="36" viewBox="0 0 85 36">
<g fill="none" stroke="#111" stroke-width="2.4">
<path d="M6.75,25.8 V13.4 C6.75,10.9 8.1,9.7 10.1,9.7 C10.9,9.7 11.5,9.9 12,10.2"/>
<circle cx="15.75" cy="20.5" r="3.75"/>
<path d="M31.2,17.6 A4.0,3.8 0 1 0 31.2,23.4"/>
<path d="M36.2,15.2 V21.2 A2.55,3.3 0 0 0 41.3,21.2 V15.2 M41.3,15.2 V25.8"/>
</g>
<path d="M5.2,15.9 H10" stroke="#111" stroke-width="1.8"/>
<path d="M51.3,16.9 C50.7,15.9 49.8,15.5 48.7,15.5 C47.3,15.5 46.3,16.3 46.3,17.5 C46.3,18.8 47.5,19.4 48.9,19.9 C50.3,20.4 51.3,21.2 51.3,22.7 C51.3,24.2 50.1,25.1 48.6,25.1 C47.3,25.1 46.3,24.5 45.6,23.5" fill="none" stroke="#111" stroke-width="2.2"/>
<circle cx="66.8" cy="18.05" r="13" fill="#e1463b"/>
<g fill="none" stroke="#fff" stroke-width="1.8">
<path d="M57.6,11.1 V25.6"/>
<ellipse cx="62.1" cy="21.25" rx="4.4" ry="3.55"/>
<path d="M76.3,18.9 A3.9,3.55 0 1 0 76.3,23.6"/>
</g>
</svg>
<svg class="abs" style="left:0;top:932px" width="11" height="11"><path d="M0 0 A11 11 0 0 0 11 11 L0 11 Z" fill="#000"/></svg>
<svg class="abs" style="left:1906px;top:936px" width="12" height="7" viewBox="1906 936 12 7"><path d="M1918,938.3 Q1916.5,943 1908.5,943 L1918,943 Z" fill="#000"/></svg>
</div></body></html>
